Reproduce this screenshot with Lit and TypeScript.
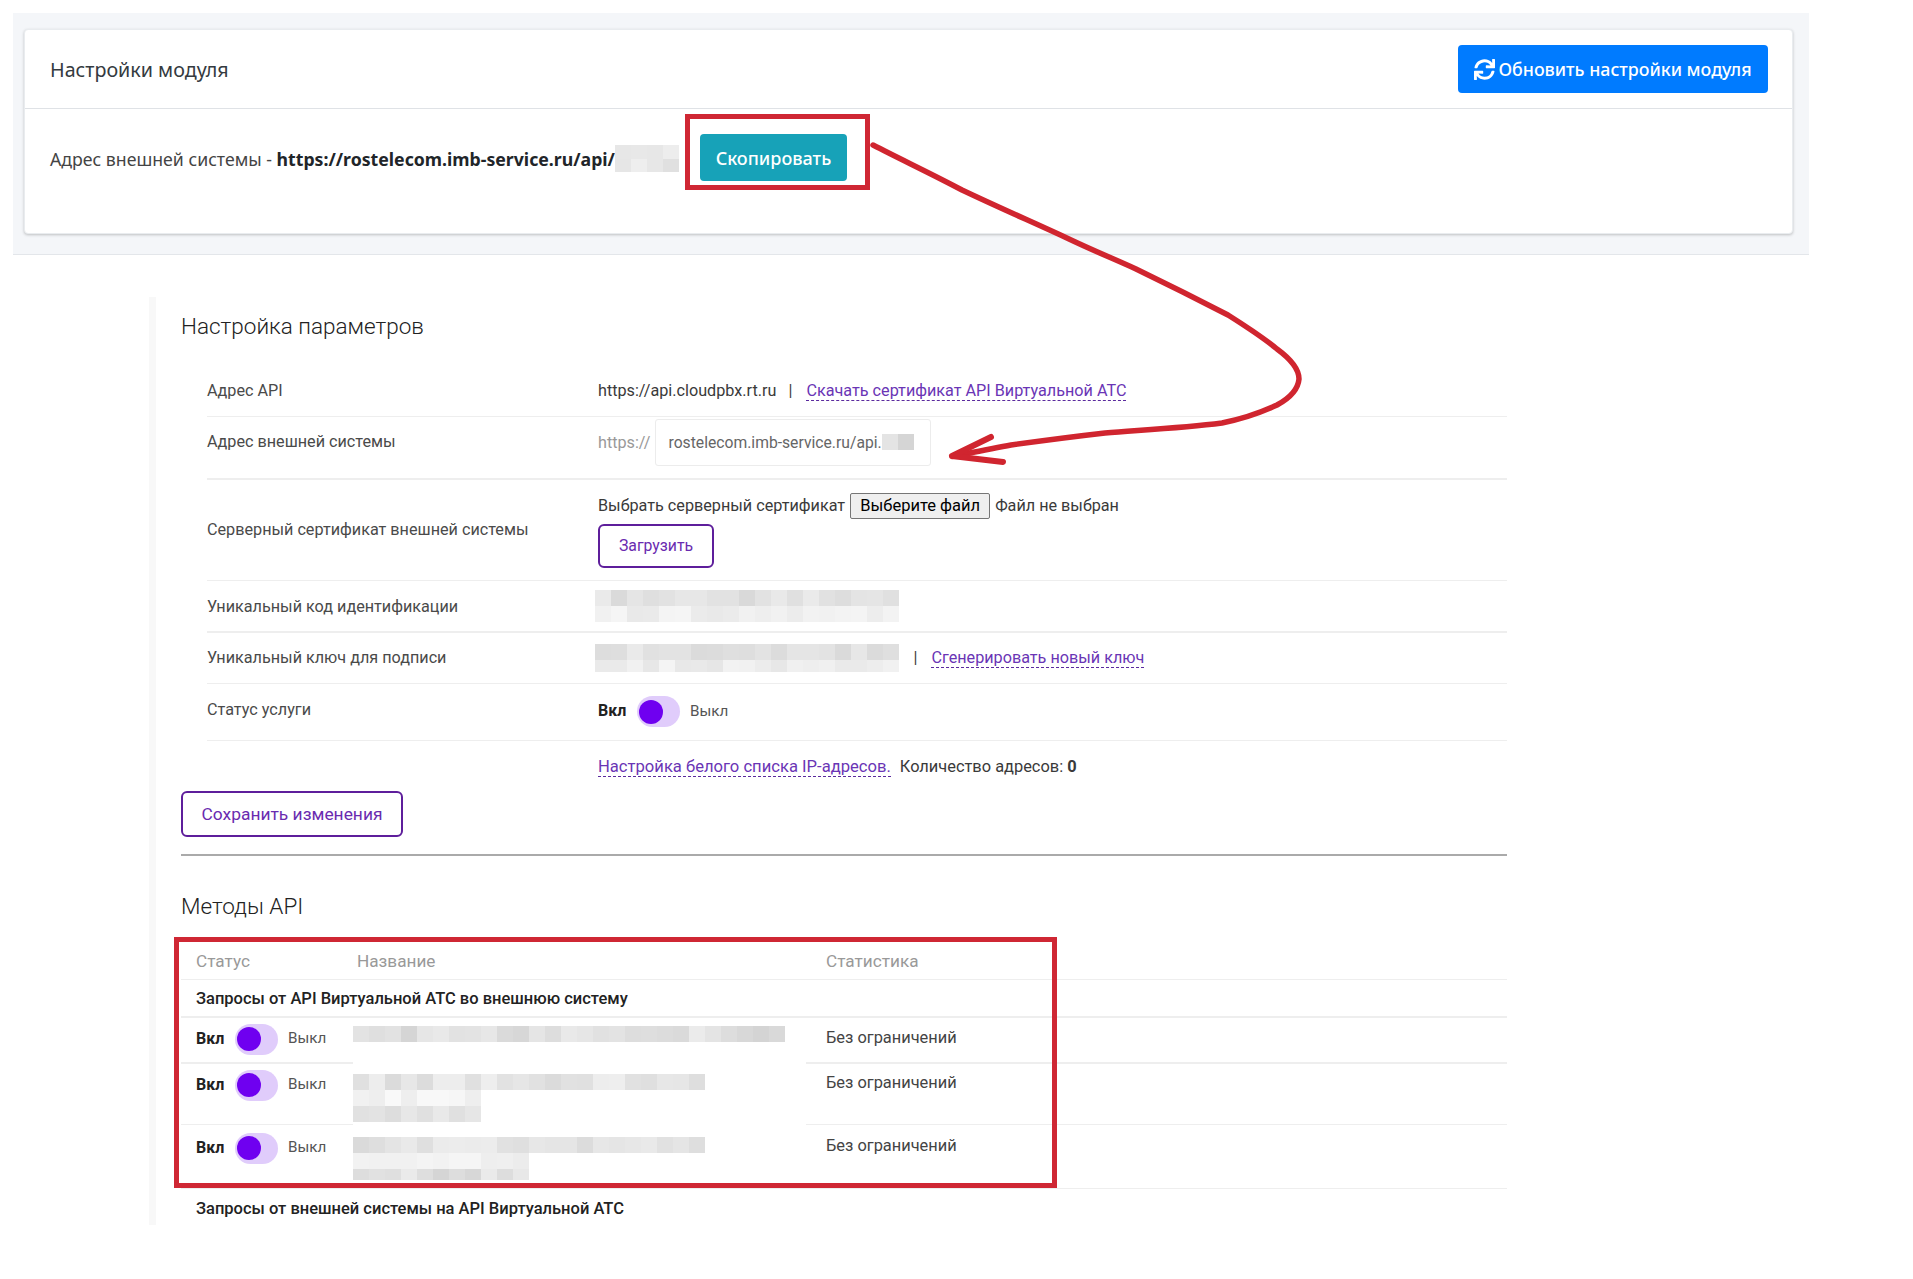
import { LitElement, html, css, svg } from "lit";
import { customElement, property } from "lit/decorators.js";

function shade(seed: number, base: number, spread: number): string {
  const h = Math.abs(Math.sin(seed * 12.9898) * 43758.5453) % 1;
  const v = Math.round(base + h * spread);
  return `rgb(${v},${v},${v})`;
}

@customElement("pix-block")
class PixBlock extends LitElement {
  static styles = css`
    :host { display: inline-flex; flex-direction: column; vertical-align: top; }
    .line { display: flex; }
    .cell { width: 16px; flex: none; }
  `;
  // each entry: "cells:height:base:spread"
  @property() spec = "";
  @property({ type: Number }) seed = 1;
  render() {
    return this.spec.split(" ").map((r, i) => {
      const [n, h, b, s] = r.split(":").map(Number);
      return html`<div class="line" style="height:${h}px">
        ${Array.from({ length: n }, (_, k) =>
          html`<div class="cell" style="background:${shade(this.seed * 31 + i * 97 + k, b, s)}"></div>`)}
      </div>`;
    });
  }
}

@customElement("mini-toggle")
class MiniToggle extends LitElement {
  static styles = css`
    :host { display: inline-flex; align-items: center; font-size: 15.2px; color: #555; }
    b { color: #222; font-weight: 700; font-size: 16px; width: 39px; margin-bottom: 2px; }
    .pill { width: 43px; height: 31px; border-radius: 16px; background: #e0ccfb; display: flex; align-items: center; padding-left: 2px; box-sizing: border-box; }
    .knob { width: 24px; height: 24px; border-radius: 50%; background: #6f00f0; }
    span { margin: 0 0 2px 10px; }
  `;
  render() {
    return html`<b>Вкл</b><div class="pill"><div class="knob"></div></div><span>Выкл</span>`;
  }
}

const ARROW = "M873 145 C 902 160 932 174 962 190 C 1002 209 1037 224 1069 239 C 1092 250 1114 259 1136 269 C 1167 284 1199 300 1228 315 C 1247 327 1265 339 1277 349 C 1292 360 1299 370 1299 379 C 1298 390 1290 398 1277 405 C 1260 413 1242 419 1222 423 C 1182 428 1142 430 1105 433 C 1070 437 1040 441 1011 445 C 990 449 970 453 953 456";

@customElement("app-root")
export class AppRoot extends LitElement {
  static styles = css`
    :host { display: block; position: relative; height: 1279px; background: #fff; overflow: hidden; font-family: Roboto, "Liberation Sans", sans-serif; color: #333; }
    .top { margin: 13px 0 0 13px; width: 1796px; height: 242px; box-sizing: border-box; background: #f4f6f9; border-bottom: 1px solid #e3e6ea; padding: 16px 16px 0 11px; font-family: "Noto Sans", sans-serif; }
    .card { height: 205px; background: #fff; border: 1px solid #e9ecef; border-radius: 4px; box-shadow: 0 1px 3px rgba(0,0,0,.22); box-sizing: border-box; }
    .card-head { height: 79px; box-sizing: border-box; border-bottom: 1px solid #dfe2e6; display: flex; justify-content: space-between; align-items: center; padding: 0 24px 0 25px; font-size: 19.7px; color: #343a40; }
    .btn-update { display: flex; align-items: center; width: 310px; height: 48px; box-sizing: border-box; justify-content: center; gap: 3px; border: 0; border-radius: 4px; background: #007bff; color: #fff; font: 500 17.8px "Noto Sans", sans-serif; }
    .btn-update svg { width: 21px; height: 21px; fill: currentColor; }
    .card-body { display: flex; align-items: flex-start; padding: 5px 0 0 25px; font-size: 17.7px; color: #444; }
    .addr { display: flex; align-items: center; margin-top: 31px; }
    .addr b { color: #212529; font-weight: 700; white-space: pre; }
    .addr span { white-space: pre; }
    .hl { margin-left: 6px; border: 5px solid #cf2734; padding: 15px 18px 4px 10px; display: flex; }
    .btn-copy { width: 147px; height: 47px; border: 0; border-radius: 4px; background: #17a2b8; color: #fff; font: 500 18px "Noto Sans", sans-serif; }

    .settings { margin: 42px 0 0 149px; width: 1363px; border-left: 7px solid #f8f8f8; box-sizing: border-box; padding: 14px 0 0 25px; height: 928px; }
    h2 { font-weight: 300; font-size: 22.5px; line-height: 30px; margin: 0; color: #222; }
    .rows { margin: 24px 5px 0 26px; font-size: 16.2px; }
    .row { display: grid; grid-template-columns: 391px 1fr; align-items: center; border-bottom: 1px solid #eee; color: #4a4a4a; }
    .row.thick { border-bottom-width: 2px; }
    .row.last { border-bottom: 0; }
    .r1 { height: 51px; }
    .r2 { padding: 1.5px 0 12px; }
    .r2 .lbl, .r3 .lbl { padding-bottom: 2px; }
    .r3 { padding: 13px 0 12px; }
    .r4 { height: 50px; }
    .r5 { height: 50px; }
    .r4 .lbl { padding-top: 1px; }
    .r5 .lbl { padding-bottom: 1px; }
    .r5 .sep { margin-left: 15px; }
    .r6 { height: 56px; }
    .r6 .lbl { padding-bottom: 5px; }
    .r7 { height: 44px; padding-top: 8px; box-sizing: border-box; }
    .val { display: flex; align-items: center; color: #3a3a3a; }
    .val.stack { display: block; }
    .sep { margin: 0 14px 0 12px; }
    .gap { margin-left: 9px; font-size: 16.4px; }
    a { color: #6a35b5; text-decoration: none; border-bottom: 1px dashed #5a2a9e; line-height: 19px; }
    .wide { font-size: 16.6px; }
    .proto { color: #999; margin-right: 5px; }
    .input { width: 276px; height: 47px; box-sizing: border-box; border: 1px solid #ececec; border-radius: 3px; display: flex; align-items: center; padding-left: 12px; color: #666; font-size: 15.7px; }
    .fileline { display: flex; align-items: center; height: 26px; }
    .filebtn { width: 140px; height: 26px; box-sizing: border-box; margin: 0 5px; background: #efefef; border: 1px solid #767676; border-radius: 2px; font: 16.5px Roboto, sans-serif; color: #000; padding: 0; }
    .btn-outline { display: flex; align-items: center; justify-content: center; box-sizing: border-box; background: #fff; border: 2px solid #5e1e9b; border-radius: 6px; color: #6a2bb0; font: 15.8px Roboto, sans-serif; }
    .upload { width: 116px; height: 44px; margin-top: 5px; }
    .save { width: 222px; height: 46px; font-size: 17.4px; margin-top: 6px; }
    .blur { margin-left: -3.5px; }
    hr { margin: 17px 5px 0 0; border: 0; border-top: 2px solid #aaa; }
    .methods { margin-top: 35px; }
    .table { position: relative; margin: 21px 5px 0 0; font-size: 16.4px; }
    .redbox { position: absolute; left: -7px; top: -5px; width: 883px; height: 251px; box-sizing: border-box; border: 5px solid #cf2734; pointer-events: none; }
    .t { display: grid; grid-template-columns: 172px 473px 1fr; border-top: 1px solid #eee; }
    .th { height: 37px; border-top: 0; color: #999; align-items: center; font-size: 17.2px; padding-top: 2px; box-sizing: border-box; }
    .th div:first-child, .tr .st, .gr { padding-left: 15px; }
    .th div:nth-child(2) { padding-left: 4px; }
    .gr { display: flex; align-items: center; color: #222; font-weight: 500; font-size: 16.5px; border-top: 1px solid #eee; }
    .g1 { height: 37px; padding-top: 1px; box-sizing: border-box; }
    .g2 { height: 40px; }
    .tr { align-items: start; }
    .t.thick { border-top-width: 2px; }
    .tr .st { padding-top: 6px; }
    .tr .nm { background: #fff; margin-top: -2px; margin-right: 20px; padding-top: 12px; }
    .tr .nm.first { padding-top: 8px; margin-top: 0; background: transparent; }
    .tr .sv { padding-top: 10px; color: #444; }
    .h2 .sv { padding-top: 9px; }
    .h1 { height: 44px; }
    .h2 { height: 60px; }
    .h3 { height: 63px; }
    .h3 .st { padding-top: 8px; }
    .h3 .nm { padding-top: 14px; }
    .h3 .sv { padding-top: 11px; }
    .arrow { position: absolute; left: 0; top: 0; width: 1913px; height: 1279px; pointer-events: none; }
    .arrow path { fill: none; stroke: #d0252f; stroke-linecap: round; stroke-linejoin: round; }
  `;

  private tr(cls: string, spec: string, seed: number, first = false) {
    return html`<div class="t tr ${cls}">
      <div class="st"><mini-toggle></mini-toggle></div>
      <div class="nm ${first ? "first" : ""}"><pix-block .spec=${spec} .seed=${seed}></pix-block></div>
      <div class="sv">Без ограничений</div>
    </div>`;
  }

  render() {
    return html`
      <section class="top">
        <div class="card">
          <div class="card-head">
            <span>Настройки модуля</span>
            <button class="btn-update">
              <svg viewBox="0 0 512 512"><path d="M440.65 12.57l4 82.77A247.16 247.16 0 0 0 255.83 8C134.73 8 33.91 94.92 12.29 209.82A12 12 0 0 0 24.09 224h49.05a12 12 0 0 0 11.67-9.26 175.91 175.91 0 0 1 317-56.94l-101.46-4.86a12 12 0 0 0-12.57 12v47.41a12 12 0 0 0 12 12H500a12 12 0 0 0 12-12V12a12 12 0 0 0-12-12h-47.37a12 12 0 0 0-11.98 12.57zM255.83 432a175.61 175.61 0 0 1-146-77.8l101.8 4.87a12 12 0 0 0 12.57-12v-47.4a12 12 0 0 0-12-12H12a12 12 0 0 0-12 12V500a12 12 0 0 0 12 12h47.35a12 12 0 0 0 12-12.6l-4.15-82.57A247.17 247.17 0 0 0 255.83 504c121.11 0 221.93-86.92 243.55-201.82a12 12 0 0 0-11.8-14.18h-49.05a12 12 0 0 0-11.67 9.26A175.86 175.86 0 0 1 255.83 432z"/></svg>
              Обновить настройки модуля
            </button>
          </div>
          <div class="card-body">
            <div class="addr">
              <span>Адрес внешней системы - </span><b>https://rostelecom.imb-service.ru/api/</b>
              <pix-block spec="4:14:205:35 4:13:222:20" seed="3"></pix-block>
            </div>
            <div class="hl"><button class="btn-copy">Скопировать</button></div>
          </div>
        </div>
      </section>

      <section class="settings">
        <h2>Настройка параметров</h2>
        <div class="rows">
          <div class="row r1">
            <div class="lbl">Адрес API</div>
            <div class="val">https://api.cloudpbx.rt.ru<span class="sep">|</span><a>Скачать сертификат API Виртуальной АТС</a></div>
          </div>
          <div class="row thick r2">
            <div class="lbl">Адрес внешней системы</div>
            <div class="val"><span class="proto">https://</span>
              <div class="input">rostelecom.imb-service.ru/api.<pix-block spec="2:16:212:18" seed="5"></pix-block></div>
            </div>
          </div>
          <div class="row r3">
            <div class="lbl">Серверный сертификат внешней системы</div>
            <div class="val stack">
              <div class="fileline">Выбрать серверный сертификат<button class="filebtn">Выберите файл</button>Файл не выбран</div>
              <button class="btn-outline upload">Загрузить</button>
            </div>
          </div>
          <div class="row thick r4">
            <div class="lbl">Уникальный код идентификации</div>
            <div class="val"><pix-block class="blur" spec="19:16:215:22 19:16:232:14" seed="7"></pix-block></div>
          </div>
          <div class="row r5">
            <div class="lbl">Уникальный ключ для подписи</div>
            <div class="val"><pix-block class="blur" spec="19:16:215:22 19:12:230:14" seed="11"></pix-block><span class="sep">|</span><a>Сгенерировать новый ключ</a></div>
          </div>
          <div class="row r6">
            <div class="lbl">Статус услуги</div>
            <div class="val"><mini-toggle></mini-toggle></div>
          </div>
          <div class="row last r7">
            <div class="lbl"></div>
            <div class="val"><a class="wide">Настройка белого списка IP-адресов.</a><span class="gap">Количество адресов: <b>0</b></span></div>
          </div>
        </div>
        <button class="btn-outline save">Сохранить изменения</button>
        <hr />
        <h2 class="methods">Методы API</h2>
        <div class="table">
          <div class="t th"><div>Статус</div><div>Название</div><div>Статистика</div></div>
          <div class="gr g1">Запросы от API Виртуальной АТС во внешнюю систему</div>
          ${this.tr("thick h1", "27:16:212:24", 13, true)}
          ${this.tr("thick h2", "22:16:218:20 8:16:236:14 8:16:218:16", 17)}
          ${this.tr("h3", "22:16:218:20 11:16:236:14 11:11:212:22", 19)}
          <div class="gr g2">Запросы от внешней системы на API Виртуальной АТС</div>
          <div class="redbox"></div>
        </div>
      </section>

      <svg class="arrow" viewBox="0 0 1913 1279">
        ${svg`<path d=${ARROW} stroke-width="5.5"></path>
        <path d="M952 456 L991 437 M952 456 L1003 462" stroke-width="6"></path>`}
      </svg>
    `;
  }
}
